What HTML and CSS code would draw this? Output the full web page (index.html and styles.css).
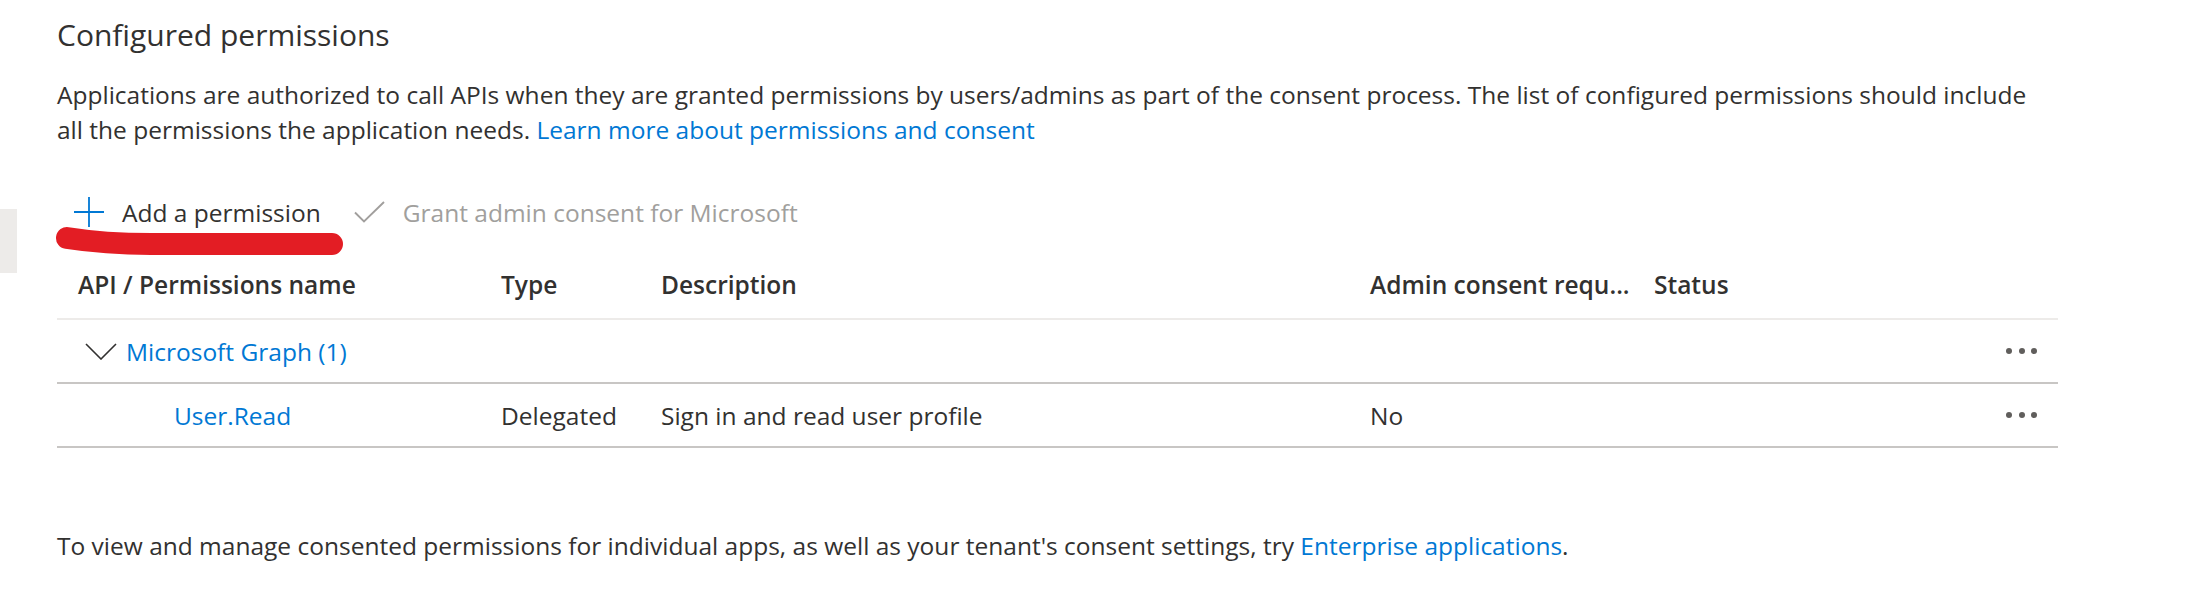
FILE: index.html
```html
<!DOCTYPE html>
<html lang="en">
<head>
<meta charset="utf-8">
<title>Configured permissions</title>
<link rel="stylesheet" href="styles.css">
</head>
<body>
<div class="page">
  <div class="rail"><div class="rail-block"></div></div>
  <main class="content">
    <h2 class="title">Configured permissions</h2>
    <p class="intro">Applications are authorized to call APIs when they are granted permissions by users/admins as part of the consent process. The list of configured permissions should include<br>all the permissions the application needs. <a class="link" href="#">Learn more about permissions and consent</a></p>

    <div class="toolbar">
      <button class="cmd" type="button">
        <svg class="icon-plus" width="30" height="30" viewBox="0 0 30 30" aria-hidden="true"><path d="M15 0V30M0 15H30" /></svg>
        <span>Add a permission</span>
      </button>
      <button class="cmd cmd-disabled" type="button" disabled>
        <svg class="icon-check" width="31" height="22" viewBox="0 0 31 22" aria-hidden="true"><path d="M1 11.5L10 20.5L30 1" /></svg>
        <span>Grant admin consent for Microsoft</span>
      </button>
      <svg class="annotation" width="300" height="40" viewBox="0 0 300 40" aria-hidden="true"><path d="M11 12C30 15 55 18 95 18L276 18" /></svg>
    </div>

    <div class="table">
      <div class="row row-head">
        <div class="cell">API / Permissions name</div>
        <div class="cell">Type</div>
        <div class="cell">Description</div>
        <div class="cell" title="Admin consent required">Admin consent requ...</div>
        <div class="cell">Status</div>
        <div class="cell"></div>
      </div>
      <div class="row row-group">
        <div class="cell cell-group">
          <svg class="icon-chevron" width="32" height="17" viewBox="0 0 32 17" aria-hidden="true"><path d="M1 1L16 16L31 1" /></svg>
          <a class="link" href="#">Microsoft Graph (1)</a>
        </div>
        <div class="cell"></div>
        <div class="cell"></div>
        <div class="cell"></div>
        <div class="cell"></div>
        <div class="cell cell-more"><span class="more"><i></i><i></i><i></i></span></div>
      </div>
      <div class="row row-item">
        <div class="cell cell-perm"><a class="link" href="#">User.Read</a></div>
        <div class="cell">Delegated</div>
        <div class="cell">Sign in and read user profile</div>
        <div class="cell">No</div>
        <div class="cell"></div>
        <div class="cell cell-more"><span class="more"><i></i><i></i><i></i></span></div>
      </div>
    </div>

    <p class="footer">To view and manage consented permissions for individual apps, as well as your tenant's consent settings, try <a class="link" href="#">Enterprise applications</a>.</p>
  </main>
</div>
</body>
</html>
```

FILE: styles.css
```css
* { box-sizing: border-box; }
html, body { margin: 0; padding: 0; background: #ffffff; }
body {
  font-family: "Open Sans", "Noto Sans", sans-serif;
  color: #323130;
  font-size: 24.5px;
}
.page { display: flex; }
.rail { width: 17px; flex: none; }
.rail-block { margin-top: 209px; height: 64px; background: #edebe9; }
.content { margin-left: 40px; width: 2001px; }
.title {
  margin: 15px 0 0;
  font-size: 30px;
  font-weight: 400;
  line-height: 40px;
}
.intro { margin: 22px 0 0; line-height: 35px; white-space: nowrap; }
.link { color: #0078d4; text-decoration: none; }

.toolbar { position: relative; display: flex; align-items: center; height: 48px; margin-top: 41px; }
.cmd {
  display: flex; align-items: center; gap: 18px;
  height: 48px; padding: 0 17px; margin: 0;
  border: 0; background: transparent;
  font: inherit; color: #323130;
}
.cmd-disabled { color: #a19f9d; padding-left: 16px; }
.icon-plus path { stroke: #0078d4; stroke-width: 1.8; fill: none; }
.icon-check path { stroke: #a19f9d; stroke-width: 1.9; fill: none; }
.annotation { position: absolute; left: -1px; top: 38px; overflow: visible; }
.annotation path { stroke: #e31d24; stroke-width: 22; stroke-linecap: round; fill: none; }

.table { margin-top: 18px; }
.row {
  display: grid;
  grid-template-columns: 423px 160px 709px 284px 1fr 68px;
  align-items: center;
  height: 64px;
  border-bottom: 2px solid #c8c6c4;
}
.row-head { height: 66px; padding-bottom: 4px; border-bottom-color: #edebe9; font-weight: 600; }
.cell { padding-left: 21px; white-space: nowrap; overflow: hidden; }
.cell-group { display: flex; align-items: center; gap: 9px; padding-left: 28px; }
.icon-chevron path { stroke: #323130; stroke-width: 1.6; fill: none; }
.cell-perm { padding-left: 117px; }
.cell-more { display: flex; justify-content: flex-end; padding-right: 21px; }
.more { display: flex; gap: 6.5px; }
.more i { display: block; width: 6px; height: 6px; border-radius: 50%; background: #605e5c; }

.footer { margin: 80px 0 0; line-height: 35px; }
```
